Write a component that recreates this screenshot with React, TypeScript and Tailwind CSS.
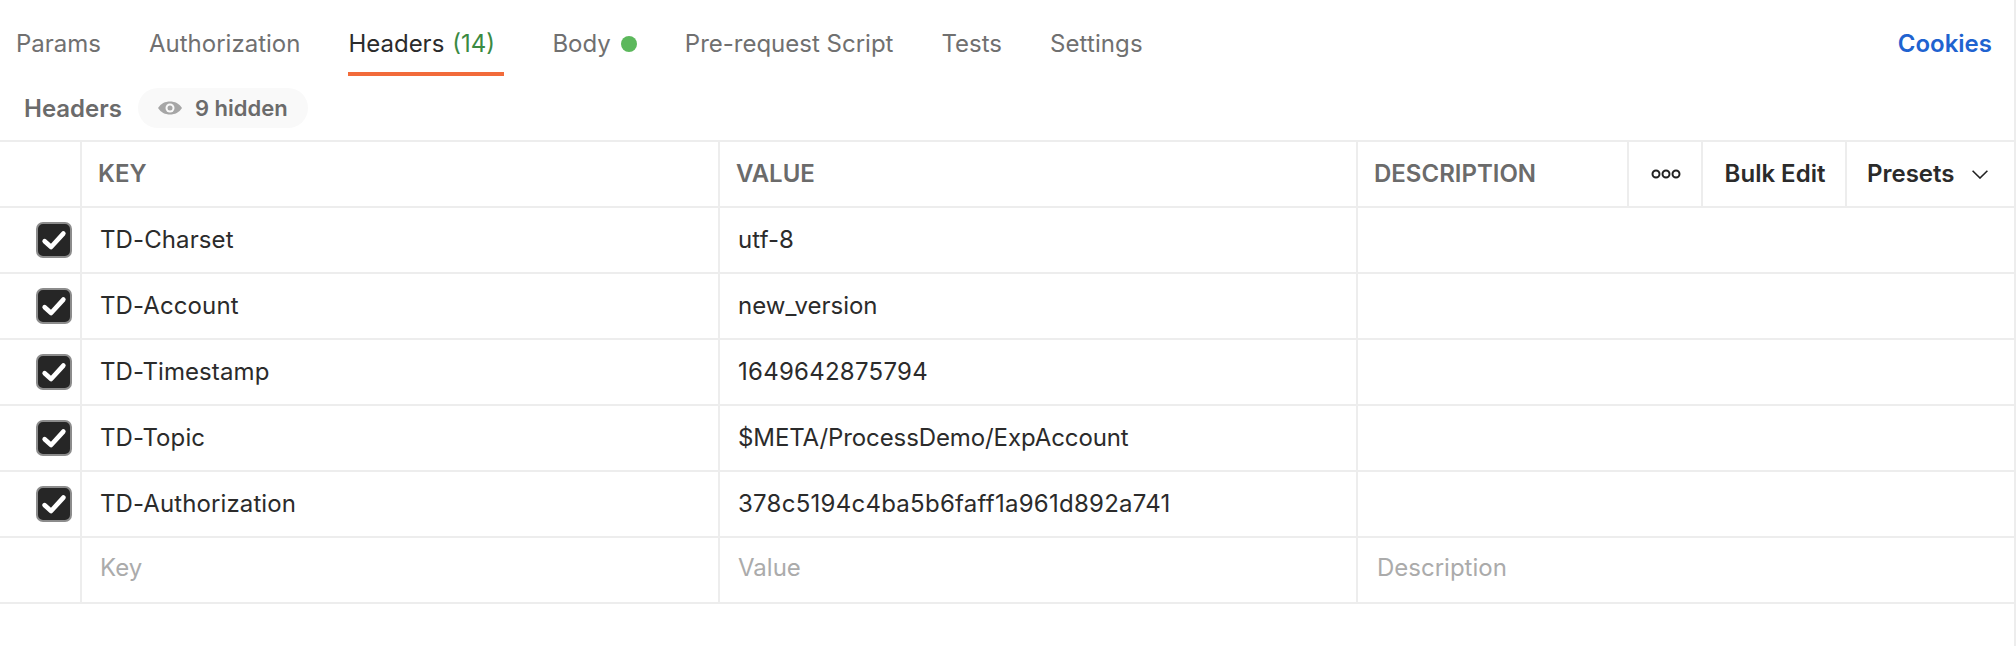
const tabs = ['Params', 'Authorization'];
const rows = [
  { key: 'TD-Charset', value: 'utf-8', valueClass: 'tracking-[0.1px]' },
  { key: 'TD-Account', value: 'new_version', valueClass: 'tracking-[0px]' },
  { key: 'TD-Timestamp', value: '1649642875794', valueClass: 'tracking-[0.26px]' },
  { key: 'TD-Topic', value: '$META/ProcessDemo/ExpAccount', valueClass: 'tracking-[-0.1px]' },
  { key: 'TD-Authorization', value: '378c5194c4ba5b6faff1a961d892a741', valueClass: 'tracking-[0.26px]' },
];

function Checkbox() {
  return (
    <div className="w-9 h-9 rounded-[7px] bg-[#262626] border-2 border-[#8c8c8c] flex items-center justify-center">
      <svg viewBox="0 0 24 24" className="w-7 h-7" fill="none" stroke="#ffffff" strokeWidth="4" strokeLinecap="round" strokeLinejoin="round">
        <path d="M4 13l5.5 5L20 6.5" />
      </svg>
    </div>
  );
}

export default function App() {
  return (
    <div className="w-[2016px] h-[646px] bg-white overflow-hidden font-['Inter',sans-serif] border-r-2 border-[#ededed]">
      {/* Tabs */}
      <div className="h-[76px] flex items-start text-[24px] text-[#707070] pr-[22px]">
        <div className="flex h-[76px] items-center pl-4 pt-[12px] gap-[48px]">
          {tabs.map((t) => (
            <span key={t}>{t}</span>
          ))}
        </div>
        <div className="h-[76px] ml-[48px] border-b-4 border-[#f26b3a] flex items-center pt-[16px] text-[#2b2b2b] w-[156px]">
          Headers <span className="text-[#3a8a42] ml-[8px]">(14)</span>
        </div>
        <div className="flex h-[76px] items-center pt-[12px] ml-[48px] gap-[48px]">
          <span className="flex items-center gap-[10px]">
            Body <span className="w-4 h-4 rounded-full bg-[#5cb85c]" />
          </span>
          <span>Pre-request Script</span>
          <span>Tests</span>
          <span className="tracking-[0.1px]">Settings</span>
        </div>
        <span className="ml-auto h-[76px] flex items-center pt-[12px] font-semibold text-[#1f63d0]">Cookies</span>
      </div>

      {/* Sub header */}
      <div className="h-[64px] flex items-start pt-[12px] pl-6 gap-4">
        <span className="text-[24px] font-semibold text-[#6b6b6b] h-10 flex items-center pt-[2px]">Headers</span>
        <div className="h-10 w-[170px] rounded-[20px] bg-[#f9f9f9] flex items-center pl-5 gap-[13px] text-[22px] font-semibold text-[#6b6b6b]">
          <svg viewBox="0 0 24 14" className="w-6 h-[14px]" fill="none">
            <path d="M0 7C3 2.5 7 .5 12 .5S21 2.5 24 7c-3 4.500-7 6.500-12 6.500S3 11.500 0 7z" fill="#a6a6a6" />
            <circle cx="12" cy="7" r="4.5" fill="#f9f9f9" />
            <circle cx="12" cy="7" r="2.5" fill="#a6a6a6" />
          </svg>
          9 hidden
        </div>
      </div>

      {/* Table */}
      <div className="border-t-2 border-[#ededed] text-[24px] text-[#2b2b2b]">
        <div className="h-[66px] flex border-b-2 border-[#ededed]">
          <div className="w-[82px] border-r-2 border-[#ededed]" />
          <div className="w-[638px] border-r-2 border-[#ededed] pl-[16px] flex items-center font-semibold text-[#6b6b6b]">KEY</div>
          <div className="w-[638px] border-r-2 border-[#ededed] pl-[16px] flex items-center font-semibold text-[#6b6b6b]">VALUE</div>
          <div className="w-[271px] border-r-2 border-[#ededed] pl-[16px] flex items-center font-semibold text-[#6b6b6b]">DESCRIPTION</div>
          <div className="w-[74px] border-r-2 border-[#ededed] flex items-center justify-center pl-[2px]">
            <svg viewBox="0 0 30 10" className="w-[30px] h-[10px]" fill="none" stroke="#212121" strokeWidth="2">
              <circle cx="5" cy="5" r="3.5" />
              <circle cx="15" cy="5" r="3.5" />
              <circle cx="25" cy="5" r="3.5" />
            </svg>
          </div>
          <div className="w-[144px] border-r-2 border-[#ededed] flex items-center justify-center font-semibold pl-[2px]">Bulk Edit</div>
          <div className="flex-1 flex items-center pl-[20px] font-semibold">
            Presets
            <svg viewBox="0 0 16 9" className="w-4 h-[9px] ml-[17px]" fill="none" stroke="#212121" strokeWidth="1.6">
              <path d="M.6.8L8 8l7.4-7.200" />
            </svg>
          </div>
        </div>
        {rows.map((row) => (
          <div key={row.key} className="h-[66px] flex border-b-2 border-[#ededed]">
            <div className="w-[82px] border-r-2 border-[#ededed] flex items-center pl-[36px]">
              <Checkbox />
            </div>
            <div className="w-[638px] border-r-2 border-[#ededed] pl-[18px] flex items-center tracking-[0.1px]">{row.key}</div>
            <div className={`w-[638px] border-r-2 border-[#ededed] pl-[18px] flex items-center ${row.valueClass}`}>{row.value}</div>
            <div className="flex-1" />
          </div>
        ))}
        <div className="h-[66px] flex border-b-2 border-[#ededed] text-[#ababab]">
          <div className="w-[82px] border-r-2 border-[#ededed]" />
          <div className="w-[638px] border-r-2 border-[#ededed] pl-[18px] pb-[4px] flex items-center">Key</div>
          <div className="w-[638px] border-r-2 border-[#ededed] pl-[18px] pb-[4px] flex items-center">Value</div>
          <div className="flex-1 pl-[19px] pb-[4px] flex items-center">Description</div>
        </div>
      </div>
    </div>
  );
}
